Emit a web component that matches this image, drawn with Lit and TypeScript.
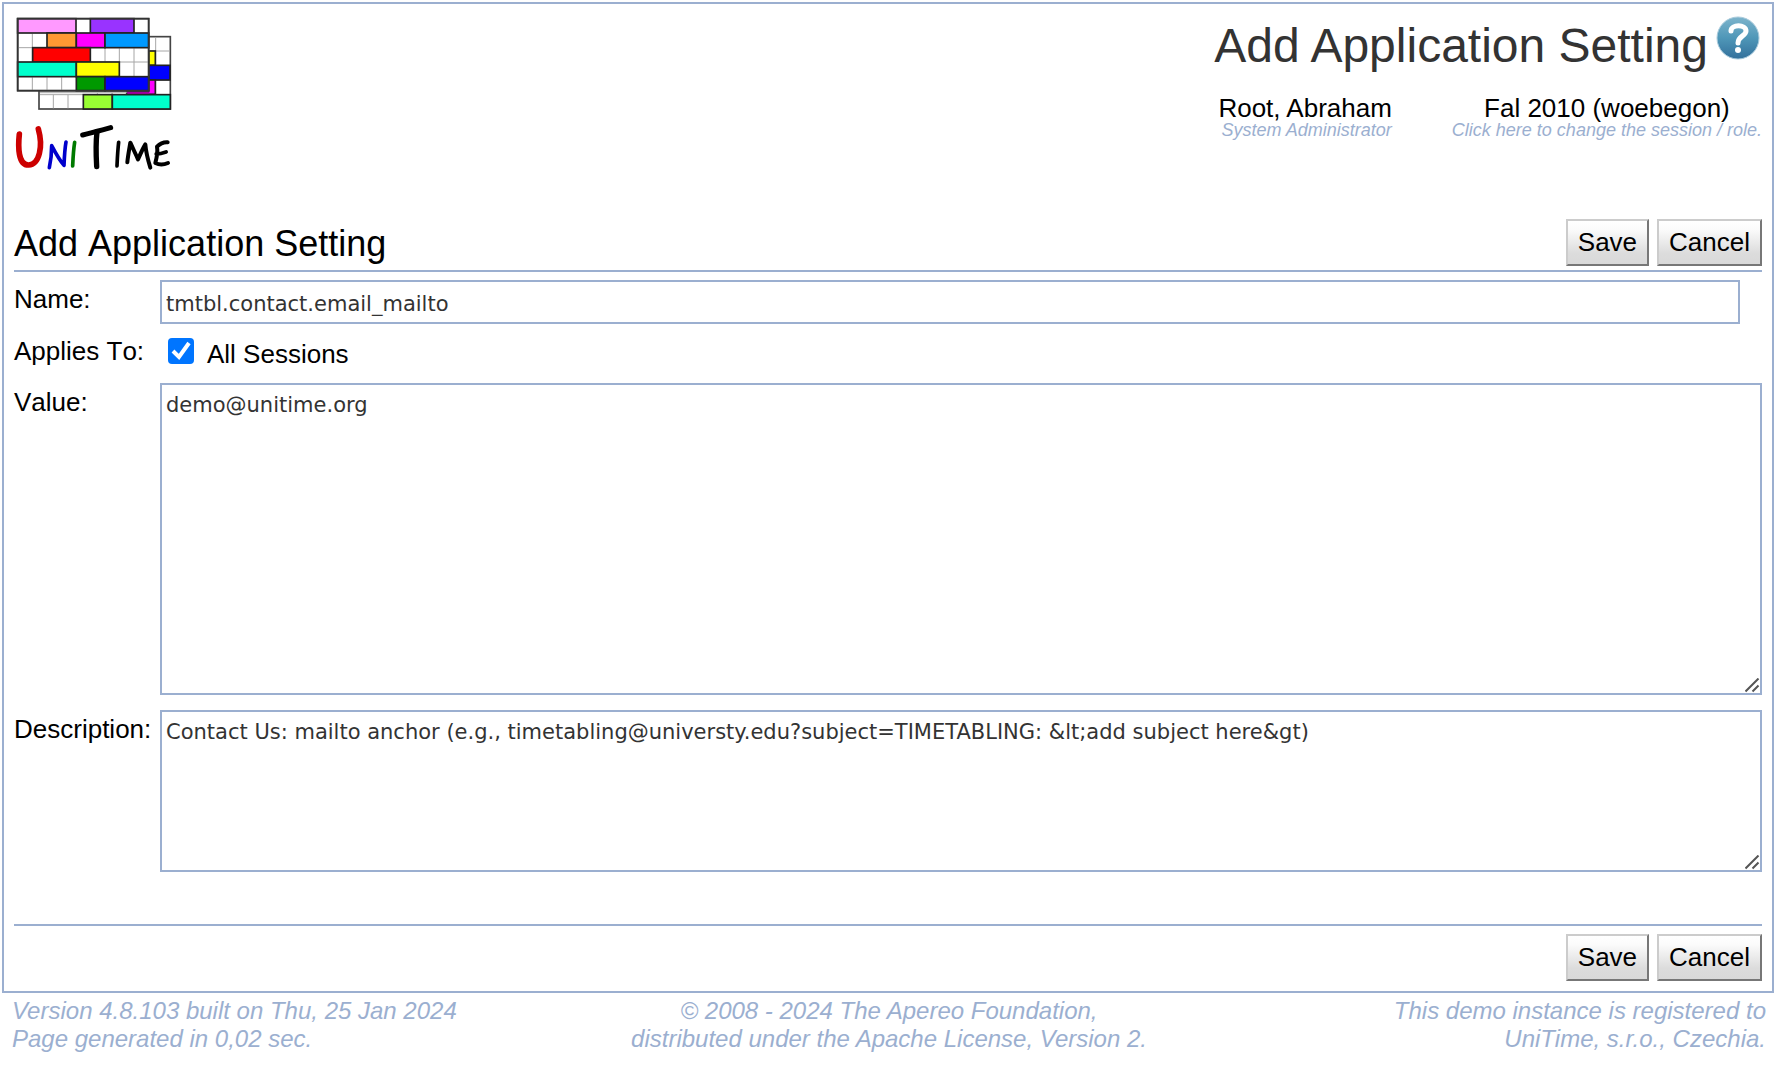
import { LitElement, html, css, svg } from "lit";
import { customElement, property, state } from "lit/decorators.js";

type Cell = [x: number, y: number, w: number, h: number, fill: string];

/* Blocks of the rear timetable sheet. */
const REAR: Cell[] = [
  [446, 153, 20, 43, "#ffff00"],
  [446, 196, 64, 44, "#0000ff"],
  [380, 240, 86, 43, "#ff00ff"],
  [250, 284, 87, 43, "#99ff33"],
  [337, 284, 174, 43, "#00ffcc"],
];

/* Blocks of the front timetable sheet. */
const FRONT: Cell[] = [
  [53, 56, 175, 43, "#ff99ff"],
  [271, 56, 131, 43, "#9933ff"],
  [141, 99, 88, 44, "#ff9933"],
  [229, 99, 86, 44, "#ff00ff"],
  [315, 99, 131, 44, "#0099ff"],
  [98, 143, 173, 43, "#ff0000"],
  [53, 186, 176, 44, "#00ffcc"],
  [229, 186, 129, 44, "#ffff00"],
  [229, 230, 86, 42, "#009900"],
  [315, 230, 131, 42, "#0000ff"],
];

const block = ([x, y, w, h, fill]: Cell) =>
  svg`<rect x=${x} y=${y} width=${w} height=${h} fill=${fill} />`;

@customElement("unitime-logo")
export class UnitimeLogo extends LitElement {
  static styles = css`
    :host { display: block; }
    .logo { display: block; width: 164px; height: 162px; }
    .block { stroke: #222; stroke-width: 5; }
    .sheet { fill: #fff; stroke: #444; stroke-width: 5; }
    .grid { fill: none; stroke: #a6a6a6; stroke-width: 3; }
    .pen { fill: none; stroke-linecap: round; stroke-linejoin: round; }
  `;

  render() {
    return html`
      <svg class="logo" viewBox="42 42 492 486" role="img" aria-label="UniTime">
        <rect class="sheet" x="117" y="110" width="394" height="217" />
        <path class="grid" d="M467 112V284M160 284V325M204 284V325M120 284H250M446 153H509M446 240H509M292 272V284M336 272V284" />
        <g class="block">${REAR.map(block)}</g>
        <path d="M120 277H380" fill="none" stroke="#bbb" stroke-width="6" />
        <path d="M382 277H448" fill="none" stroke="#a000a0" stroke-width="8" />
        <rect class="sheet" x="53" y="56" width="393" height="216" />
        <path class="grid" d="M97 101V141M97 145V184M315 145V184M358 145V228M402 145V228M97 232V270M141 232V270M185 232V270M56 143H96M273 186H444" />
        <g class="block">${FRONT.map(block)}</g>
        <rect x="53" y="56" width="393" height="216" fill="none" stroke="#333" stroke-width="5" />
        <g class="pen">
          <path d="M58 402C54 440 54 496 86 495C118 493 130 440 115 387" stroke="#cc0000" stroke-width="17" />
          <path d="M148 503C153 480 155 458 155 437C166 458 178 480 192 496C193 472 194 448 198 426" stroke="#0000cc" stroke-width="11" />
          <path d="M224 427C220 452 219 476 218 498" stroke="#007a00" stroke-width="11" />
          <path d="M248 405C275 398 305 391 332 383" stroke="#000" stroke-width="15" />
          <path d="M291 395C287 430 288 465 290 500" stroke="#000" stroke-width="16" />
          <path d="M356 427C353 452 352 476 351 498" stroke="#000" stroke-width="11" />
          <path d="M382 487C384 466 388 446 391 428C399 446 407 462 414 478C421 462 428 446 436 433C438 458 444 480 451 503" stroke="#000" stroke-width="12" />
          <path d="M503 427C492 426 480 431 471 440C474 456 470 474 466 489C480 496 492 494 504 489M469 462C480 462 490 459 498 456" stroke="#000" stroke-width="12" />
        </g>
      </svg>
    `;
  }
}

@customElement("help-icon")
export class HelpIcon extends LitElement {
  static styles = css`
    :host { display: block; }
    .icon { display: block; width: 44px; height: 44px; }
  `;

  render() {
    return html`
      <svg class="icon" viewBox="0 0 44 44" aria-hidden="true">
        <defs>
          <linearGradient id="disc" x1="0" y1="0" x2="0" y2="1">
            <stop offset="0" stop-color="#7db4cc" />
            <stop offset="0.5" stop-color="#4f97b8" />
            <stop offset="1" stop-color="#33709b" />
          </linearGradient>
        </defs>
        <circle cx="22" cy="22" r="21" fill="url(#disc)" stroke="#a9cbdc" stroke-width="1" />
        <path d="M15 15C15 8 30 8 30 15C30 20 22 20 22 27" fill="none" stroke="#fff" stroke-width="5" stroke-linecap="round" />
        <circle cx="22" cy="34" r="3" fill="#fff" />
      </svg>
    `;
  }
}

@customElement("action-bar")
export class ActionBar extends LitElement {
  static styles = css`
    :host { display: flex; gap: 8px; }
    .action {
      box-sizing: border-box;
      height: 47px;
      margin: 0;
      padding: 0 10px 2px;
      border: 2px solid;
      border-color: #ccc #777 #777 #ccc;
      border-radius: 0;
      background: linear-gradient(#fff 0%, #fbfbfb 20%, #dcdcdc 75%, #d9d9d9 100%);
      color: #000;
      font: 26px/30px "Liberation Sans", Arial, sans-serif;
      white-space: nowrap;
    }
  `;

  render() {
    return html`
      <button class="action" type="button">Save</button>
      <button class="action" type="button">Cancel</button>
    `;
  }
}

@customElement("app-root")
export class AppRoot extends LitElement {
  static styles = css`
    :host {
      display: block;
      font: 26px/30px "Liberation Sans", Arial, sans-serif;
      color: #000;
      background: #fff;
    }
    .frame {
      margin: 2px 4px 0 2px;
      padding: 10px;
      border: 2px solid #9bafd0;
    }
    .top {
      display: flex;
      justify-content: space-between;
      align-items: flex-start;
      height: 205px;
      box-sizing: border-box;
    }
    .banner {
      display: flex;
      flex-direction: column;
      align-items: flex-end;
      gap: 21px;
    }
    .title-row {
      display: flex;
      align-items: flex-start;
      gap: 8px;
      padding-right: 2px;
    }
    .page-title {
      margin: 0;
      padding-top: 4px;
      font-size: 48px;
      line-height: 56px;
      font-weight: 400;
      color: #333;
    }
    .help { display: block; padding-top: 2px; }
    .session { display: flex; gap: 60px; }
    .who { display: flex; flex-direction: column; align-items: flex-end; }
    .term { align-items: center; }
    .plain { color: #000; text-decoration: none; line-height: 26px; }
    .note {
      color: #9bafd0;
      font-size: 18px;
      line-height: 18px;
      font-style: italic;
    }
    .section {
      display: flex;
      justify-content: space-between;
      align-items: flex-end;
      padding-bottom: 4px;
      border-bottom: 2px solid #9bafd0;
    }
    .section-title {
      margin: 0;
      font-size: 36px;
      line-height: 44px;
      font-weight: 400;
      font-kerning: none;
    }
    .fields {
      display: grid;
      grid-template-columns: 136px 1fr;
      column-gap: 10px;
      padding-top: 8px;
      font-kerning: none;
    }
    .label { padding-top: 4px; white-space: nowrap; }
    .text, .area {
      box-sizing: border-box;
      display: block;
      margin: 0;
      border: 2px solid #9bafd0;
      border-radius: 0;
      outline: none;
      background: #fff;
      color: #333;
      font: 21px/24px "DejaVu Sans", Verdana, sans-serif;
    }
    .text {
      width: calc(100% - 22px);
      height: 44px;
      padding: 3px 4px 0;
    }
    .area { width: 100%; padding: 8px 4px; resize: vertical; }
    .area::-webkit-scrollbar { width: 16px; height: 16px; }
    .area::-webkit-resizer {
      background: url("data:image/svg+xml,%3Csvg xmlns='http://www.w3.org/2000/svg' viewBox='0 0 16 16'%3E%3Cpath d='M1 14L14 1M8 14L14 8' fill='none' stroke='%23555' stroke-width='2'/%3E%3C/svg%3E") center / 16px 16px no-repeat;
    }
    .value { height: 312px; }
    .description { height: 162px; }
    .check-row {
      display: flex;
      align-items: flex-start;
      gap: 13px;
      height: 59px;
      padding: 14px 0 0 8px;
      box-sizing: border-box;
    }
    .sessions { padding-top: 1px; }
    .applies { padding-top: 12px; }
    .check {
      appearance: none;
      width: 26px;
      height: 26px;
      margin: 0;
      border-radius: 4px;
      background: #fff;
      border: 2px solid #767676;
      box-sizing: border-box;
    }
    .check:checked {
      border: 0;
      background: #0075ff url("data:image/svg+xml,%3Csvg xmlns='http://www.w3.org/2000/svg' viewBox='0 0 26 26'%3E%3Cpath d='M5 13L11 19L21 5' fill='none' stroke='white' stroke-width='4'/%3E%3C/svg%3E") center / 26px 26px;
    }
    .gap { grid-column: 1 / -1; height: 15px; }
    .bottom {
      display: flex;
      justify-content: flex-end;
      margin-top: 52px;
      padding-top: 8px;
      border-top: 2px solid #9bafd0;
    }
    .footer {
      display: grid;
      grid-template-columns: 1fr auto 1fr;
      padding: 4px 12px 0;
      font-size: 24px;
      line-height: 28px;
      font-style: italic;
      color: #9bafd0;
    }
    .center { text-align: center; }
    .right { text-align: right; }
    .footer-link { color: inherit; text-decoration: none; }
  `;

  @property() name = "tmtbl.contact.email_mailto";
  @property() value = "demo@unitime.org";
  @property() description =
    "Contact Us: mailto anchor (e.g., timetabling@universty.edu?subject=TIMETABLING: &lt;add subject here&gt)";
  @state() private allSessions = true;

  private toggle(e: Event) {
    this.allSessions = (e.target as HTMLInputElement).checked;
  }

  render() {
    return html`
      <main class="frame">
        <header class="top">
          <unitime-logo></unitime-logo>
          <div class="banner">
            <div class="title-row">
              <h1 class="page-title">Add Application Setting</h1>
              <a class="help" href="#help" aria-label="Help"><help-icon></help-icon></a>
            </div>
            <div class="session">
              <div class="who">
                <a class="plain" href="#user">Root, Abraham</a>
                <span class="note">System Administrator</span>
              </div>
              <div class="who term">
                <a class="plain" href="#session">Fal 2010 (woebegon)</a>
                <span class="note">Click here to change the session / role.</span>
              </div>
            </div>
          </div>
        </header>

        <div class="section">
          <h2 class="section-title">Add Application Setting</h2>
          <action-bar></action-bar>
        </div>

        <form class="fields">
          <label class="label" for="name">Name:</label>
          <input class="text" id="name" type="text" .value=${this.name} />

          <span class="label applies">Applies To:</span>
          <div class="check-row">
            <input class="check" id="all" type="checkbox" .checked=${this.allSessions} @change=${this.toggle} />
            <label class="sessions" for="all">All Sessions</label>
          </div>

          <label class="label" for="value">Value:</label>
          <textarea class="area value" id="value" .value=${this.value}></textarea>

          <div class="gap"></div>

          <label class="label" for="description">Description:</label>
          <textarea class="area description" id="description" .value=${this.description}></textarea>
        </form>

        <div class="bottom"><action-bar></action-bar></div>
      </main>

      <footer class="footer">
        <div>Version 4.8.103 built on Thu, 25 Jan 2024<br />Page generated in 0,02 sec.</div>
        <div class="center">
          <a class="footer-link" href="#license">© 2008 - 2024 The Apereo Foundation,<br />distributed under the Apache License, Version 2.</a>
        </div>
        <div class="right">This demo instance is registered to<br />UniTime, s.r.o., Czechia.</div>
      </footer>
    `;
  }
}
